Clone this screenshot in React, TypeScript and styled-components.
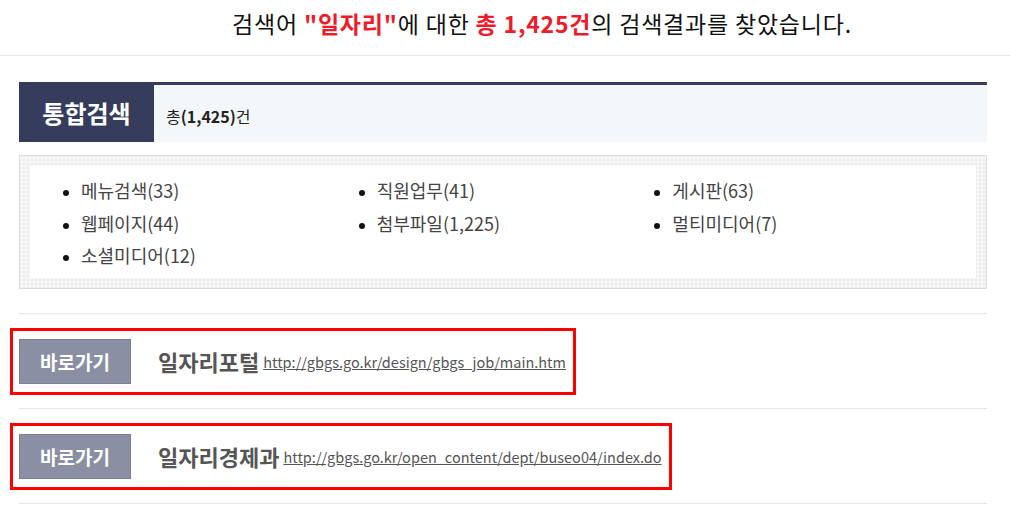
import styled, { createGlobalStyle } from 'styled-components';

const GlobalStyle = createGlobalStyle`
  body {
    margin: 0;
    background: #fff;
    font-family: 'Noto Sans CJK KR', 'Noto Sans', sans-serif;
    color: #333;
  }
`;

const ResultHeader = styled.header`
  border-bottom: 1px solid #e6e6e6;
  padding: 7px 0 16px 74px;
  text-align: center;
  font-size: 23px;
  line-height: 32px;
  color: #111;
  letter-spacing: 0.8px;
`;

const Hit = styled.strong`
  color: #ee1c2a;
  font-weight: 700;
`;

const Content = styled.main`
  margin: 0 23px 0 19px;
  padding-top: 26px;
`;

const TitleBar = styled.div`
  display: flex;
  align-items: stretch;
  border-top: 3px solid #353c5c;
  background: #f4f7fa;
  height: 57px;
`;

const TitleBadge = styled.h2`
  margin: -3px 0 0;
  width: 135px;
  background: #353c5c;
  color: #fff;
  font-size: 24px;
  font-weight: 700;
  display: flex;
  align-items: center;
  justify-content: center;
`;

const TitleCount = styled.span`
  display: flex;
  align-items: center;
  padding: 4px 0 0 12px;
  font-size: 16px;
  color: #222;
  b {
    font-weight: 700;
  }
`;

const CategoryFrame = styled.div`
  margin-top: 13px;
  border: 1px solid #dcdcdc;
  padding: 10px;
  background-color: #efefef;
  background-image: radial-gradient(circle, #fbfbfb 1.4px, transparent 1.6px);
  background-size: 4px 4px;
`;

const CategoryList = styled.ul`
  margin: 0;
  background: #fff;
  list-style: disc;
  display: grid;
  grid-template-columns: repeat(3, 1fr);
  padding: 8px 8px 6px 51px;
`;

const CategoryItem = styled.li`
  font-size: 18px;
  line-height: 32.5px;
  color: #444;
  &::marker {
    color: #111;
    font-size: 15px;
  }
`;

const LinkList = styled.section`
  margin-top: 24px;
  border-bottom: 1px solid #e6e6e6;
`;

const LinkRow = styled.div`
  border-top: 1px solid #e6e6e6;
  padding: 14px 0 13px;
`;

const Highlight = styled.div`
  display: inline-flex;
  align-items: center;
  border: 3px solid #ff0000;
  margin-left: -9px;
  padding: 8px 7px 8px 6px;
`;

const GoButton = styled.a`
  width: 110px;
  height: 43px;
  border: 1px solid #7b8093;
  background: #8a8fa3;
  color: #fff;
  font-size: 19px;
  font-weight: 700;
  display: flex;
  align-items: center;
  justify-content: center;
  text-decoration: none;
`;

const SiteName = styled.strong`
  margin-left: 27px;
  font-size: 22px;
  font-weight: 700;
  color: #555;
`;

const SiteUrl = styled.a`
  margin-left: 4px;
  font-size: 14.5px;
  color: #555;
  text-decoration: underline;
`;

const categories = [
  '메뉴검색(33)',
  '직원업무(41)',
  '게시판(63)',
  '웹페이지(44)',
  '첨부파일(1,225)',
  '멀티미디어(7)',
  '소셜미디어(12)',
];

const links = [
  { name: '일자리포털', url: 'http://gbgs.go.kr/design/gbgs_job/main.htm' },
  { name: '일자리경제과', url: 'http://gbgs.go.kr/open_content/dept/buseo04/index.do' },
];

export default function App() {
  return (
    <>
      <GlobalStyle />
      <ResultHeader>
        검색어 <Hit>"일자리"</Hit>에 대한 <Hit>총 1,425건</Hit>의 검색결과를 찾았습니다.
      </ResultHeader>
      <Content>
        <TitleBar>
          <TitleBadge>통합검색</TitleBadge>
          <TitleCount>
            총<b>(1,425)</b>건
          </TitleCount>
        </TitleBar>
        <CategoryFrame>
          <CategoryList>
            {categories.map(c => (
              <CategoryItem key={c}>{c}</CategoryItem>
            ))}
          </CategoryList>
        </CategoryFrame>
        <LinkList>
          {links.map(l => (
            <LinkRow key={l.url}>
              <Highlight>
                <GoButton href='#'>바로가기</GoButton>
                <SiteName>{l.name}</SiteName>
                <SiteUrl href='#'>{l.url}</SiteUrl>
              </Highlight>
            </LinkRow>
          ))}
        </LinkList>
      </Content>
    </>
  );
}
